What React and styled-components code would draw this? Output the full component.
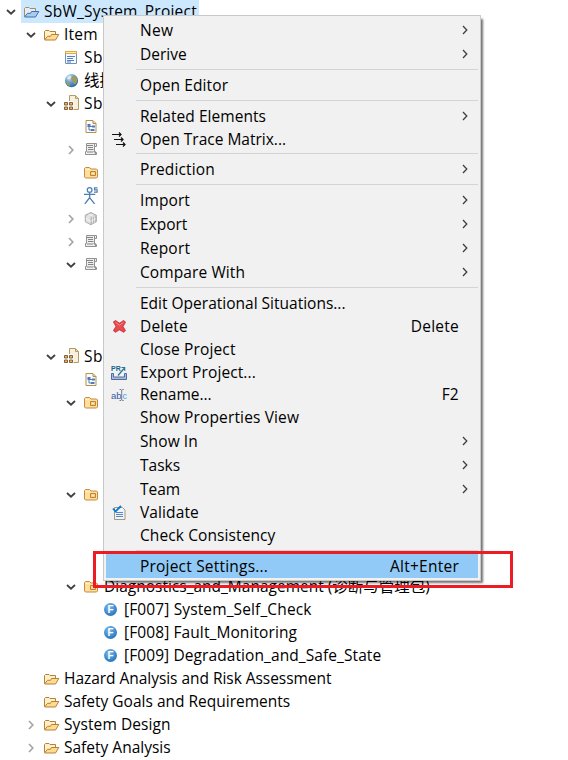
import React from "react";
import styled, { createGlobalStyle } from "styled-components";

const GlobalStyle = createGlobalStyle`
  * {
    box-sizing: border-box;
  }
  body {
    margin: 0;
    background: #fff;
    overflow: hidden;
  }
`;

const Screen = styled.main`
  position: relative;
  width: 568px;
  height: 760px;
  overflow: hidden;
  background: #fff;
  color: #000;
  font-family: "Open Sans", "Noto Sans CJK SC", sans-serif;
  font-size: 15.5px;
  line-height: 23px;
  white-space: nowrap;
`;

const Tree = styled.ul`
  margin: 0;
  padding: 0;
  list-style: none;
`;

const TreeRow = styled.li`
  display: flex;
  align-items: center;
  height: 23px;
  padding-left: ${({ $level }) => 3 + $level * 20}px;
`;

const Toggle = styled.span`
  display: flex;
  justify-content: center;
  width: 16px;
  margin-right: 2px;
`;

const NodeLabel = styled.span`
  display: flex;
  align-items: center;
  height: 23px;
  padding: 0 2px;
  background: ${({ $selected }) => ($selected ? "#cce8ff" : "transparent")};
  svg {
    flex: none;
    margin: 0 4px 0 1px;
  }
`;

const Text = styled.span`
  letter-spacing: ${({ $track = 0 }) => $track}px;
`;

const Menu = styled.div`
  position: absolute;
  top: 15px;
  left: 103px;
  width: 378px;
  height: 566px;
  padding: 2px;
  border: 1px solid #c9c9c9;
  background: #f1f1f1;
  box-shadow: 3px 3px 2px -1px rgba(0, 0, 0, 0.55);
`;

const MenuItem = styled.div`
  display: grid;
  grid-template-columns: 34px auto 1fr;
  align-items: center;
  height: ${({ $height }) => $height}px;
  padding-right: 6px;
  background: ${({ $active }) => ($active ? "#91c9f7" : "transparent")};
`;

const MenuIcon = styled.span`
  display: flex;
  padding-left: 5px;
`;

const Shortcut = styled.span`
  justify-self: end;
  padding-right: 13px;
  letter-spacing: 0.25px;
`;

const Arrow = styled.span`
  display: flex;
  justify-self: end;
  padding-right: 4px;
`;

const Separator = styled.hr`
  height: 7px;
  margin: 0 0 0 30px;
  border: 0;
  background: linear-gradient(#d4d4d4, #d4d4d4) 0 3px / 100% 1px no-repeat;
`;

const Highlight = styled.div`
  position: absolute;
  top: 551px;
  left: 93px;
  width: 420px;
  height: 37px;
  border: 3px solid #ed1c24;
`;

function Svg({ children, size = 16 }) {
  return (
    <svg width={size} height={size} viewBox="0 0 16 16" fill="none" overflow="visible">
      {children}
    </svg>
  );
}

function Chevron({ open }) {
  return open ? (
    <svg width="10" height="6" viewBox="0 0 10 6" fill="none">
      <path d="M1 1l4 3.7L9 1" stroke="#404040" strokeWidth="1.8" />
    </svg>
  ) : (
    <svg width="6" height="10" viewBox="0 0 6 10" fill="none">
      <path d="M1 1l3.8 4L1 9" stroke="#a6a6a6" strokeWidth="1.7" />
    </svg>
  );
}

function OpenFolder({ blue }) {
  const line = blue ? "#3f6fae" : "#b5803a";
  return (
    <Svg>
      <path d="M.5 12.5V4.5l1-1h3.5l1 1h5.5v3" fill={blue ? "#e3eefa" : "#fff0c8"} stroke={blue ? "#a98c55" : line} />
      <path d="M.7 12.8L3.5 9.3h3l1-1.8h7.3L11.5 13H.7z" fill={blue ? "#a9cbed" : "#ffdb8d"} stroke={line} />
    </Svg>
  );
}

function PackageFolder() {
  return (
    <Svg>
      <path d="M.5 12V3.5l1-1h4l1.5 1.5h5.5l1 1v7l-1 1h-11z" fill="#ffdf9b" stroke="#c58b43" />
      <path d="M1.5 4.5h4" stroke="#fff3cf" />
      <path d="M6.5 6.5h5v4h-5z" fill="#ffd175" stroke="#b98342" />
      <path d="M8 8h2v1H8z" fill="#f4efc5" />
    </Svg>
  );
}

function FormIcon() {
  return (
    <Svg>
      <path d="M1.5 1.5h11v12h-11z" fill="#f4f8ff" stroke="#7590b5" />
      <path d="M1 1h12v3H1z" fill="#dba94b" />
      <path d="M2 2.5h10" stroke="#fff0a6" />
      <path d="M3 6.5h8M3 8.5h6M3 10.5h7M3 12h4" stroke="#587fc0" />
    </Svg>
  );
}

function Globe() {
  return (
    <Svg>
      <defs>
        <radialGradient id="globe" cx=".35" cy=".25" r=".8">
          <stop stopColor="#d5e8f4" />
          <stop offset=".5" stopColor="#649dc8" />
          <stop offset="1" stopColor="#2c6396" />
        </radialGradient>
      </defs>
      <circle cx="7.5" cy="7.7" r="6.6" fill="url(#globe)" />
      <path d="M8 3h3l2 2.5v3L11.5 11H10l-.8-2.5-1.7-1L7 5.5zM2 8.5l2.5.5L6 11l-.5 2.3-2.5-2z" fill="#a09b62" />
      <path d="M3 5l2-2 2 .5-1 2-2 1z" fill="#dcecf1" />
    </Svg>
  );
}

function ModelIcon() {
  return (
    <Svg>
      <path d="M5.5-.5h6l3 3v11h-9z" fill="#f6f0dc" stroke="#b39b68" />
      <path d="M11.5 0v2.5h3" fill="#ead69e" stroke="#b79d62" />
      <path d="M-.5 5h10v9.5h-10z" fill="#fff" />
      <path d="M.5 6.500h3v2.500h-3zM5.500 6.500h3v2.500h-3zM.5 11h3v2.500h-3zM5.500 11h3v2.500h-3z" fill="#f2b45c" stroke="#80603c" />
    </Svg>
  );
}

function DiagramIcon() {
  return (
    <Svg>
      <path d="M2 1.5h7l3 3v9H2z" fill="#f8fbff" stroke="#b3904e" />
      <path d="M9 2v2.500h3" stroke="#b3904e" fill="#ead18b" />
      <path d="M3.500 5h3v3h-3zM8 6.500h3v2H8zM7 10h3.500v2H7z" fill="#5479b5" />
      <path d="M5 8v3h2.500M5.500 7.500h3" stroke="#5479b5" />
    </Svg>
  );
}

function ScrollIcon() {
  return (
    <Svg>
      <path d="M2.500 1.500h10v3h-2v6h2v2h-11v-3h1z" fill="#eee" stroke="#929292" />
      <path d="M3 3.500h6M4 5.500h5M4 7.500h5M3 10h6" stroke="#858585" />
      <path d="M10.500 1.500v6h-1M9.500 9.500h2v3" stroke="#929292" />
    </Svg>
  );
}

function ActorIcon() {
  return (
    <Svg size={18}>
      <circle cx="5" cy="2.7" r="2.1" stroke="#4f7eb3" strokeWidth="1.1" />
      <path d="M0 6.5h10M5 5.3v4.2L.7 15M5 9.5l4.4 5.5" stroke="#4f7eb3" strokeWidth="1.2" />
      <path d="M12 .8H9.3v1.8h2.400v1.900H8.900" stroke="#4f7eb3" />
    </Svg>
  );
}

function CubeIcon() {
  return (
    <Svg>
      <path d="M6.8 1.5l5.5 2.7v6.500l-5.500 3-5.500-3V4.200z" fill="#d6d6d6" stroke="#a5a5a5" />
      <path d="M6.8 6.8v6.700l5.500-3V4.200z" fill="#b5b5b5" />
      <path d="M3 5v6.500M5 6v6.500M1.500 7.500l5.300 2.700L12 7.500M8.500 6v6.500M10.500 5v6.500M4 3l5.500 2.500M9.500 3L4 5.500" stroke="#fff" strokeWidth=".6" />
    </Svg>
  );
}

const Ball = styled.span`
  width: 13px;
  height: 13px;
  margin: 0 7px 1px 1px;
  border-radius: 50%;
  background: radial-gradient(circle at 40% 30%, #79b9ed, #2877bd 75%);
  color: #fff;
  font: bold 10px/13px "Liberation Sans", sans-serif;
  text-align: center;
`;

function TraceIcon() {
  return (
    <Svg>
      <path d="M1 2.5h9M3 7.5h9M5 12.5h9M8 .5l2 2-2 2M10 5.5l2 2-2 2M12 10.5l2 2-2 2" stroke="#111" strokeWidth="1.2" />
    </Svg>
  );
}

function DeleteIcon() {
  return (
    <Svg>
      <path d="M2.7 3.1l1.8-1.4 4 2.8 4-2.8 1.7 1.6-2.5 4 2.5 4.2-1.7 1.5-4-2.6-4 2.6-1.8-1.5 2.6-4.2z" fill="#ee4a4e" stroke="#d2404b" strokeWidth="1.3" strokeLinejoin="round" />
      <path d="M4.5 3.2l4 3.1 4-3.1" stroke="#f88d86" />
    </Svg>
  );
}

function ExportIcon() {
  return (
    <Svg>
      <path d="M.5 8.5h2V12h11V8.500h2v6H.500z" fill="#a5bbdd" stroke="#526d9d" />
      <path d="M7 10.5l6-7M10.5 2.500h3.200v3.200" stroke="#28749b" strokeWidth="1.2" />
      <text x="0" y="6" fill="#17658c" fontFamily="Liberation Sans" fontSize="7" fontWeight="bold">PR</text>
    </Svg>
  );
}

function RenameIcon() {
  return (
    <Svg>
      <text x="0" y="11.5" fill="#3558a0" fontFamily="Liberation Sans" fontSize="9.5">ab</text>
      <text x="11.5" y="11.5" fill="#4f9ddd" fontFamily="Liberation Sans" fontSize="9">c</text>
      <path d="M8.5 2.5h1.5l.7.7.7-.7h1.3M10.7 3v10M8.5 13.5h1.500l.7-.7.7.7h1.300" stroke="#6c7f99" />
    </Svg>
  );
}

function ValidateIcon() {
  return (
    <Svg>
      <path d="M3.5 2.5h8L14 5v9.500H3.500z" fill="#edf4ff" stroke="#a29b7b" />
      <path d="M5 7.500h7M5 9.500h7M5 11.500h7" stroke="#6185bd" />
      <path d="M2 3.500l2.500 3L10 1" stroke="#0878cf" strokeWidth="1.8" />
    </Svg>
  );
}

const nodes = [
  { level: 0, open: true, icon: <OpenFolder blue />, label: "SbW_System_Project", selected: true, track: 0.24 },
  { level: 1, open: true, icon: <OpenFolder />, label: "Item Definition", track: 0.25 },
  { level: 2, icon: <FormIcon />, label: "SbW", track: 0.5 },
  { level: 2, icon: <Globe />, label: "线控" },
  { level: 2, open: true, icon: <ModelIcon />, label: "SbW", track: 0.5 },
  { level: 3, icon: <DiagramIcon /> },
  { level: 3, open: false, icon: <ScrollIcon /> },
  { level: 3, icon: <PackageFolder /> },
  { level: 3, icon: <ActorIcon /> },
  { level: 3, open: false, icon: <CubeIcon /> },
  { level: 3, open: false, icon: <ScrollIcon /> },
  { level: 3, open: true, icon: <ScrollIcon /> },
  { level: 4 },
  { level: 4 },
  { level: 4 },
  { level: 2, open: true, icon: <ModelIcon />, label: "SbW", track: 0.5 },
  { level: 3, icon: <DiagramIcon /> },
  { level: 3, open: true, icon: <PackageFolder /> },
  { level: 4 },
  { level: 4 },
  { level: 4 },
  { level: 3, open: true, icon: <PackageFolder /> },
  { level: 4 },
  { level: 4 },
  { level: 4 },
  { level: 3, open: true, icon: <PackageFolder />, label: "Diagnostics_and_Management (诊断与管理包)" },
  { level: 4, icon: <Ball>F</Ball>, label: "[F007] System_Self_Check", track: 0.13 },
  { level: 4, icon: <Ball>F</Ball>, label: "[F008] Fault_Monitoring", track: 0.1 },
  { level: 4, icon: <Ball>F</Ball>, label: "[F009] Degradation_and_Safe_State", track: 0.09 },
  { level: 1, icon: <OpenFolder />, label: "Hazard Analysis and Risk Assessment", track: -0.04 },
  { level: 1, icon: <OpenFolder />, label: "Safety Goals and Requirements" },
  { level: 1, open: false, icon: <OpenFolder />, label: "System Design", track: 0.1 },
  { level: 1, open: false, icon: <OpenFolder />, label: "Safety Analysis" },
];

const items = [
  { label: "New", sub: true, track: 0.3 },
  { label: "Derive", sub: true },
  null,
  { label: "Open Editor", height: 24, track: 0.1 },
  null,
  { label: "Related Elements", sub: true, track: 0.05 },
  { label: "Open Trace Matrix...", icon: <TraceIcon />, height: 22 },
  null,
  { label: "Prediction", sub: true, track: 0.15 },
  null,
  { label: "Import", sub: true, track: 0.1 },
  { label: "Export", sub: true },
  { label: "Report", sub: true, track: 0.2 },
  { label: "Compare With", sub: true, track: 0.1 },
  null,
  { label: "Edit Operational Situations...", height: 24 },
  { label: "Delete", icon: <DeleteIcon />, keys: "Delete", track: 0.2 },
  { label: "Close Project", track: 0.15 },
  { label: "Export Project...", icon: <ExportIcon />, height: 22, track: 0.1 },
  { label: "Rename...", icon: <RenameIcon />, keys: "F2" },
  { label: "Show Properties View", track: 0.14 },
  { label: "Show In", sub: true, track: 0.1 },
  { label: "Tasks", sub: true },
  { label: "Team", sub: true },
  { label: "Validate", icon: <ValidateIcon />, track: 0.1 },
  { label: "Check Consistency", track: 0.1 },
  null,
  { label: "Project Settings...", keys: "Alt+Enter", active: true, height: 24, track: 0.2 },
];

export default function App() {
  return (
    <Screen>
      <GlobalStyle />
      <Tree>
        {nodes.map((node, i) => (
          <TreeRow key={i} $level={node.level}>
            <Toggle>{node.open !== undefined && <Chevron open={node.open} />}</Toggle>
            <NodeLabel $selected={node.selected}>
              {node.icon}
              <Text $track={node.track}>{node.label}</Text>
            </NodeLabel>
          </TreeRow>
        ))}
      </Tree>
      <Menu>
        {items.map((item, i) =>
          item ? (
            <MenuItem key={i} $height={item.height || (item.sub ? 24 : 23)} $active={item.active}>
              <MenuIcon>{item.icon}</MenuIcon>
              <Text $track={item.track}>{item.label}</Text>
              {item.keys && <Shortcut>{item.keys}</Shortcut>}
              {item.sub && (
                <Arrow>
                  <svg width="6" height="10" viewBox="0 0 6 10" fill="none">
                    <path d="M1 1l3.8 4L1 9" stroke="#404040" strokeWidth="1.3" />
                  </svg>
                </Arrow>
              )}
            </MenuItem>
          ) : (
            <Separator key={i} />
          )
        )}
      </Menu>
      <Highlight />
    </Screen>
  );
}
